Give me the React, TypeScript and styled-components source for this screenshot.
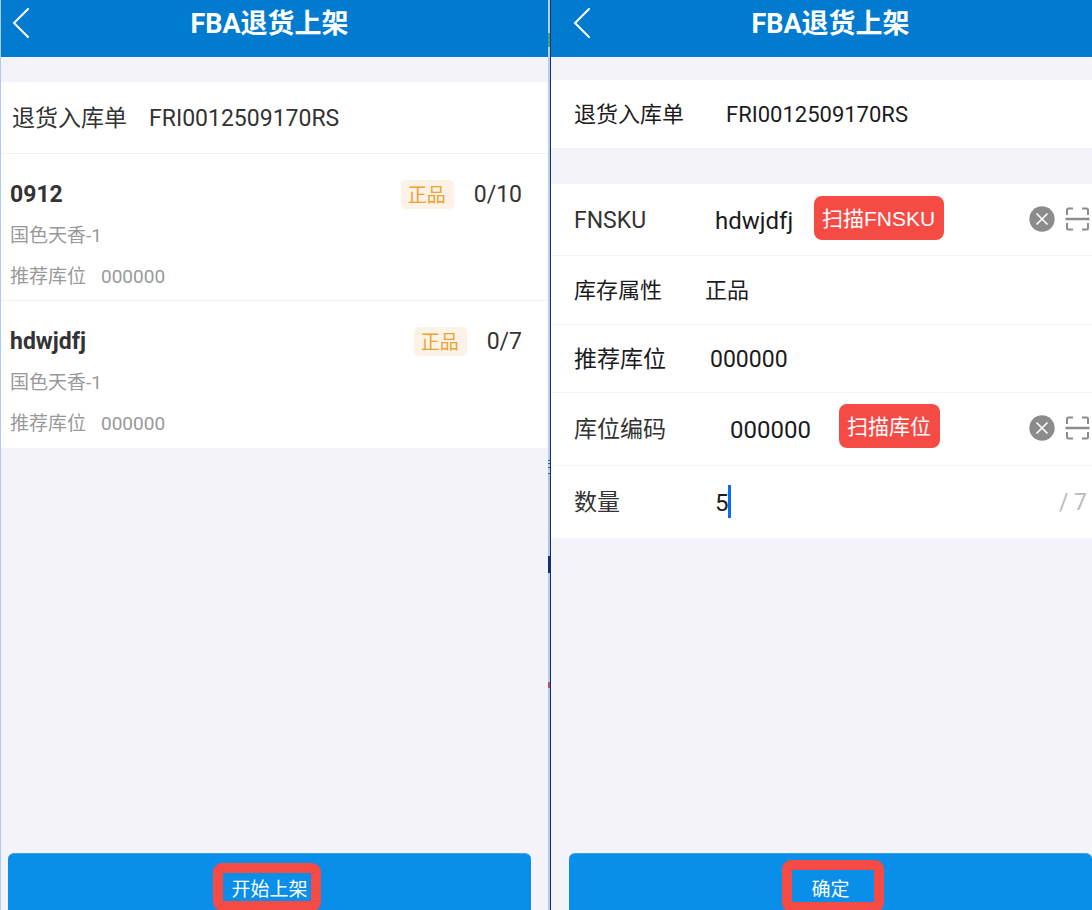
import React from "react";
import styled, { createGlobalStyle } from "styled-components";

const GlobalStyle = createGlobalStyle`
  * { box-sizing: border-box; }
  body {
    margin: 0;
    background: #f4f3f9;
    font-family: Roboto, "Noto Sans CJK SC", sans-serif;
    color: #333;
  }
  button, input { font-family: inherit; }
`;

const Screens = styled.div`
  display: grid;
  grid-template-columns: minmax(0, 548fr) 3px minmax(0, 541fr);
  min-height: 100vh;
`;

const Panel = styled.main<{ $edge?: boolean }>`
  display: flex;
  flex-direction: column;
  min-width: 0;
  background: #f4f3f9;
  border-left: ${(p) => (p.$edge ? "1px solid #a9cdf9" : "none")};
`;

const Seam = styled.div`
  border-right: 1px solid #17305f;
  background: linear-gradient(
    #b9cdf0 0 33px, #35a583 33px 47px, #b9cdf0 47px 60px, #b0d0f8 60px 460px,
    #3b5f99 460px 461px, #b0d0f8 461px 463px, #3b5f99 463px 464px, #b0d0f8 464px 467px,
    #3b5f99 467px 468px, #b0d0f8 468px 473px, #3b5f99 473px 474px, #b0c4ea 474px 556px,
    #0b3478 556px 573px, #b0cdf3 573px 682px, #b3566f 682px 688px, #b0cdf3 688px
  );
`;

const Header = styled.header<{ $start: number; $end: number }>`
  display: grid;
  grid-template-columns: 40px 1fr 40px;
  align-items: center;
  height: 57px;
  padding: 0 ${(p) => p.$end}px 10px ${(p) => p.$start}px;
  background: #007bd0;
  color: #fff;
`;

const BackButton = styled.button`
  display: flex;
  padding: 0 0 2px 4px;
  border: 0;
  background: none;
  color: inherit;
`;

const Title = styled.h1`
  margin: 0;
  font-size: 27px;
  font-weight: 700;
  line-height: 32px;
  text-align: center;
  white-space: nowrap;
`;

const OrderRow = styled.section`
  display: flex;
  align-items: center;
  gap: 22px;
  height: 72px;
  margin-top: 25px;
  padding: 2px 11px 0;
  background: #fff;
  border-bottom: 1px solid #f3f3f5;
  font-size: 23px;
  line-height: 32px;
`;

const ItemList = styled.ul`
  margin: 0;
  padding: 0;
  list-style: none;
`;

const Item = styled.li`
  display: flex;
  flex-direction: column;
  gap: 12px;
  padding: 26px 26px 9px 9px;
  background: #fff;
  border-bottom: 1px solid #f3f3f5;
  line-height: 29px;
  &:last-child { border-color: #fff; }
`;

const ItemHead = styled.div`
  display: flex;
  align-items: center;
  gap: 20px;
  height: 29px;
  font-size: 23px;
  line-height: 31px;
`;

const Sku = styled.strong`
  flex: 1;
  font-weight: 700;
`;

const Tag = styled.span`
  height: 29px;
  padding: 0 8px 0 7px;
  border-radius: 5px;
  background: #fcf2e6;
  color: #eca135;
  font-size: 19px;
`;

const Detail = styled.div`
  display: flex;
  gap: 15px;
  color: #999;
  font-size: 19px;
`;

const Card = styled.section<{ $gap: number }>`
  margin-top: ${(p) => p.$gap}px;
  background: #fff;
  color: #1b1b1d;
`;

const Field = styled.div<{ $height: number; $size?: number }>`
  position: relative;
  display: flex;
  align-items: center;
  height: ${(p) => p.$height}px;
  padding: 2px 2px 0 23px;
  border-bottom: 1px solid #f3f3f8;
  font-size: ${(p) => p.$size ?? 23}px;
  line-height: 32px;
  &:last-child { border-color: #fff; }
`;

const Label = styled.label<{ $width: number; $soft?: boolean }>`
  flex: none;
  width: ${(p) => p.$width}px;
  color: ${(p) => (p.$soft ? "#333" : "inherit")};
`;

const TextInput = styled.input<{ $narrow?: boolean }>`
  flex: ${(p) => (p.$narrow ? "none" : "1")};
  width: ${(p) => (p.$narrow ? "1ch" : "auto")};
  min-width: 0;
  height: 32px;
  padding: 0;
  border: 0;
  outline: 0;
  background: none;
  color: #1b1b1d;
  font-size: 24px;
`;

const Caret = styled.span`
  width: 3px;
  height: 33px;
  margin-bottom: 2px;
  background: #0a6cf0;
`;

const Total = styled.span`
  margin-left: auto;
  padding-right: 3px;
  color: #bbb;
  font-size: 23px;
`;

const IconButton = styled.button`
  display: flex;
  flex: none;
  margin-left: 10px;
  padding: 0 0 4px;
  border: 0;
  background: none;
`;

const Callout = styled.span<{ $left: number; $top: number }>`
  position: absolute;
  left: ${(p) => p.$left}px;
  top: ${(p) => p.$top}px;
  height: 44px;
  padding: 0 9px 0 8px;
  border-radius: 8px;
  background: #f64a45;
  color: #fff;
  font-family: "Liberation Sans", "Noto Sans CJK SC", sans-serif;
  font-size: 21px;
  line-height: 46px;
  white-space: nowrap;
`;

const Footer = styled.footer<{ $start: number; $end: number }>`
  display: flex;
  margin-top: auto;
  padding: 0 ${(p) => p.$end}px 0 ${(p) => p.$start}px;
`;

const SubmitButton = styled.button`
  flex: 1;
  height: 57px;
  padding: 15px 0 0;
  border: 0;
  border-top: 1px solid #3ea4ea;
  border-radius: 6px 6px 0 0;
  background: #098ee9;
  color: #fff;
  font-size: 19px;
  line-height: 28px;
`;

const Marked = styled.span<{ $inset: string }>`
  position: relative;
  display: inline-block;
  &::after {
    content: "";
    position: absolute;
    inset: ${(p) => p.$inset};
    border: 10px solid #f64a45;
    border-radius: 9px;
  }
`;

const BackIcon = () => (
  <svg width="18" height="30" viewBox="0 0 18 30" fill="none" stroke="#fff" strokeWidth="2" strokeLinecap="round">
    <path d="M16 1 2 15l14 14" />
  </svg>
);

const ClearIcon = () => (
  <svg width="26" height="26" viewBox="0 0 26 26">
    <circle cx="13" cy="13" r="12.7" fill="#8c8c8c" />
    <path d="m7.5 7.5 11 11m0-11-11 11" stroke="#fff" strokeWidth="1.6" />
  </svg>
);

const ScanIcon = () => (
  <svg width="25" height="26" viewBox="0 0 25 26" fill="none" stroke="#8c8c8c" strokeWidth="2">
    <path d="M2 9V4q0-1.500 1.500-1.500H8M17 2.500h4.500Q23 2.500 23 4v5M2 17v5q0 1.500 1.500 1.500H8M17 23.500h4.500q1.500 0 1.500-1.500v-5" />
    <path d="M.5 13H24.500" strokeWidth="2.500" />
  </svg>
);

const PageHeader = ({ start, end }: { start: number; end: number }) => (
  <Header $start={start} $end={end}>
    <BackButton aria-label="返回"><BackIcon /></BackButton>
    <Title>FBA退货上架</Title>
  </Header>
);

const FieldActions = () => (
  <>
    <IconButton aria-label="清除"><ClearIcon /></IconButton>
    <IconButton aria-label="扫描"><ScanIcon /></IconButton>
  </>
);

const items = [
  { sku: "0912", count: "0/10" },
  { sku: "hdwjdfj", count: "0/7" },
];

export default function App() {
  return (
    <>
      <GlobalStyle />
      <Screens>
        <Panel $edge>
          <PageHeader start={7} end={17} />
          <OrderRow>
            <span>退货入库单</span>
            <span>FRI0012509170RS</span>
          </OrderRow>
          <ItemList>
            {items.map((item) => (
              <Item key={item.sku}>
                <ItemHead>
                  <Sku>{item.sku}</Sku>
                  <Tag>正品</Tag>
                  <span>{item.count}</span>
                </ItemHead>
                <Detail>国色天香-1</Detail>
                <Detail>
                  <span>推荐库位</span>
                  <span>000000</span>
                </Detail>
              </Item>
            ))}
          </ItemList>
          <Footer $start={7} $end={17}>
            <SubmitButton><Marked $inset="-13px -13px -7px -18px">开始上架</Marked></SubmitButton>
          </Footer>
        </Panel>
        <Seam />
        <Panel>
          <PageHeader start={18} end={0} />
          <Card $gap={23}>
            <Field $height={68} $size={22}>
              <Label as="span" $width={152}>退货入库单</Label>
              <span>FRI0012509170RS</span>
            </Field>
          </Card>
          <Card $gap={36}>
            <Field $height={72}>
              <Label $width={141} $soft htmlFor="fnsku">FNSKU</Label>
              <TextInput id="fnsku" defaultValue="hdwjdfj" />
              <Callout $left={263} $top={12}>扫描FNSKU</Callout>
              <FieldActions />
            </Field>
            <Field $height={69} $size={22}>
              <Label as="span" $width={131}>库存属性</Label>
              <span>正品</span>
            </Field>
            <Field $height={68}>
              <Label as="span" $width={136}>推荐库位</Label>
              <span>000000</span>
            </Field>
            <Field $height={73}>
              <Label $width={156} $soft htmlFor="location">库位编码</Label>
              <TextInput id="location" defaultValue="000000" />
              <Callout $left={288} $top={11}>扫描库位</Callout>
              <FieldActions />
            </Field>
            <Field $height={72}>
              <Label $width={141} $soft htmlFor="quantity">数量</Label>
              <TextInput id="quantity" $narrow defaultValue="5" />
              <Caret />
              <Total>/ 7</Total>
            </Field>
          </Card>
          <Footer $start={18} $end={0}>
            <SubmitButton><Marked $inset="-16px -34px -8px -29px">确定</Marked></SubmitButton>
          </Footer>
        </Panel>
      </Screens>
    </>
  );
}
